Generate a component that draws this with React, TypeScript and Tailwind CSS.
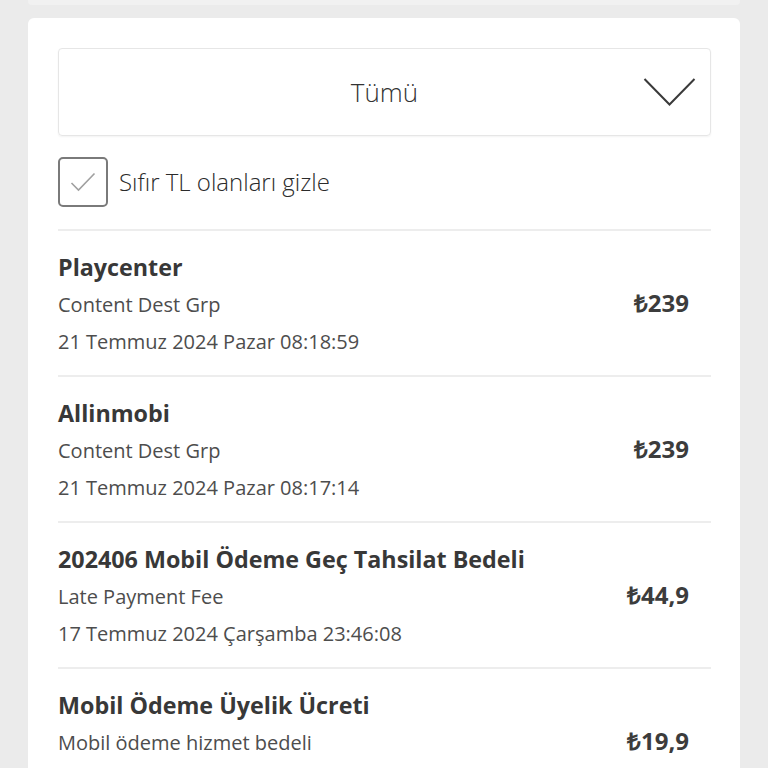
import React from 'react';

type Charge = {
  title: string;
  sub: string;
  date?: string;
  amount: string;
};

const charges: Charge[] = [
  { title: 'Playcenter', sub: 'Content Dest Grp', date: '21 Temmuz 2024 Pazar 08:18:59', amount: '₺239' },
  { title: 'Allinmobi', sub: 'Content Dest Grp', date: '21 Temmuz 2024 Pazar 08:17:14', amount: '₺239' },
  { title: '202406 Mobil Ödeme Geç Tahsilat Bedeli', sub: 'Late Payment Fee', date: '17 Temmuz 2024 Çarşamba 23:46:08', amount: '₺44,9' },
  { title: 'Mobil Ödeme Üyelik Ücreti', sub: 'Mobil ödeme hizmet bedeli', amount: '₺19,9' },
];

const ChargeRow: React.FC<{ item: Charge }> = ({ item }) => (
  <div className="flex items-center justify-between border-t-2 border-[#ededed] pt-[18px] pb-[15px] pr-[22px]">
    <div className="flex flex-col">
      <p className="text-[23.3px] font-bold leading-[37px] text-[#383838]">{item.title}</p>
      <p className="text-[20px] leading-[38px] text-[#4d4d4d]">{item.sub}</p>
      {item.date ? (
        <p className="text-[20px] leading-[36px] text-[#4d4d4d]">{item.date}</p>
      ) : (
        <div className="h-[36px]" />
      )}
    </div>
    <span className="mb-[4px] text-[24px] font-bold text-[#3c3c3c]">{item.amount}</span>
  </div>
);

export default function App() {
  return (
    <div className="h-[768px] overflow-hidden bg-[#ebebeb] font-['Open_Sans',sans-serif]">
      <div className="mx-[28px] h-[5px] rounded-b-[4px] bg-[#f1f1f1]" />
      <div className="mx-[28px] mt-[13px] rounded-t-[6px] bg-white px-[30px] pt-[30px] pr-[29px]">
        <div className="relative flex h-[88px] items-center justify-center rounded-[4px] border border-[#e6e6e6] shadow-[0_1px_2px_rgba(0,0,0,0.05)]">
          <span className="text-[26px] font-light text-[#333333]">Tümü</span>
          <svg className="absolute right-[14px] top-1/2 -translate-y-1/2" width="53" height="30" viewBox="0 0 53 30" fill="none">
            <path d="M1.5 2 L26.5 27.5 L51.5 2" stroke="#3a3a3a" strokeWidth="2" />
          </svg>
        </div>

        <div className="mt-[21px] flex items-center gap-[11px] pb-[22px]">
          <div className="flex h-[50px] w-[50px] items-center justify-center rounded-[5px] border-2 border-[#7a7a7a]">
            <svg width="26" height="20" viewBox="0 0 26 20" fill="none">
              <path d="M1.5 11 L8.5 18 L24.5 1.5" stroke="#a0a0a0" strokeWidth="1.6" />
            </svg>
          </div>
          <span className="text-[24px] font-light text-[#2b2b2b]">Sıfır TL olanları gizle</span>
        </div>

        {charges.map((c, i) => (
          <ChargeRow key={i} item={c} />
        ))}
      </div>
    </div>
  );
}
